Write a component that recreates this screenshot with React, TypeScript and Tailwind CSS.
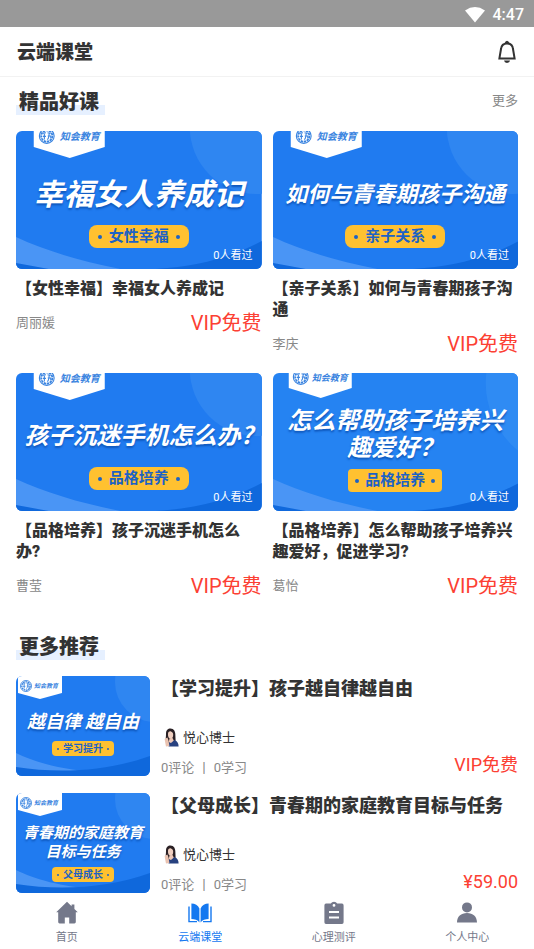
import { clsx } from "clsx";

type CoverKind = "wide" | "wideAlt" | "small";

const courses = [
  {
    title: "【女性幸福】幸福女人养成记",
    teacher: "周丽媛",
    kind: "wide" as CoverKind,
    coverText: "幸福女人养成记",
    tag: "女性幸福",
    textClass: "text-[30px] leading-[54px]",
  },
  {
    title: "【亲子关系】如何与青春期孩子沟通",
    teacher: "李庆",
    kind: "wide" as CoverKind,
    coverText: "如何与青春期孩子沟通",
    tag: "亲子关系",
    textClass: "text-[22px] leading-[54px]",
  },
  {
    title: "【品格培养】孩子沉迷手机怎么办?",
    teacher: "曹莹",
    kind: "wide" as CoverKind,
    coverText: "孩子沉迷手机怎么办?",
    tag: "品格培养",
    textClass: "text-[24px] leading-[54px]",
  },
  {
    title: "【品格培养】怎么帮助孩子培养兴趣爱好，促进学习?",
    teacher: "葛怡",
    kind: "wideAlt" as CoverKind,
    coverText: "怎么帮助孩子培养兴\n趣爱好？",
    tag: "品格培养",
    textClass: "text-[24px] leading-[27px]",
  },
];

const recommends = [
  {
    title: "【学习提升】孩子越自律越自由",
    coverText: "越自律 越自由",
    tag: "学习提升",
    price: "VIP免费",
    textClass: "mb-0.5 text-[18px] leading-[38px]",
    padClass: "pt-[25px]",
  },
  {
    title: "【父母成长】青春期的家庭教育目标与任务",
    coverText: "青春期的家庭教育\n目标与任务",
    tag: "父母成长",
    price: "¥59.00",
    textClass: "mb-[7px] text-[15px] leading-[19px]",
    padClass: "pt-[29px]",
  },
];

const Emblem = ({ x, y, r }: { x: number; y: number; r: number }) => (
  <g transform={`translate(${x} ${y}) scale(${r / 8})`} fill="none" stroke="#3a84e0">
    <circle r="7.4" strokeWidth="1.1" />
    <circle r="5.6" strokeWidth="1.8" strokeDasharray="2.4 0.7" />
    <path d="M-3.6 -2.6 L-1 -3.4 M-2.4 -3 V3.4 M-4 0.4 H-0.8 M0.8 -3.2 L3.8 -2.4 M2.4 -3.6 C2.4 0 2 2.4 0.6 3.6 M1 0 H4 V2.6" strokeWidth="1.1" />
  </g>
);

const CoverArt = ({ kind }: { kind: CoverKind }) => {
  if (kind === "small") {
    return (
      <svg className="absolute inset-0 h-full w-full" viewBox="0 0 134 100" preserveAspectRatio="xMidYMid slice" aria-hidden="true">
        <rect width="134" height="100" fill="#207bf0" />
        <circle cx="139" cy="6" r="40" fill="#2f86f1" />
        <path d="M0 77 C18 86 46 94 80 96 L60 100 H0 Z" fill="#4a95f5" />
        <path d="M0 91 C45 98 92 95 134 80 V100 H0 Z" fill="#0f68dc" />
        <path d="M2 0 H46 V17 L24 23 L2 17 Z" fill="#fff" />
        <Emblem x={10} y={10} r={6} />
        <text x="18" y="12" fontSize="6" fontStyle="italic" fontWeight="700" fill="#3a84e0">知会教育</text>
      </svg>
    );
  }
  const alt = kind === "wideAlt";
  return (
    <svg className="absolute inset-0 h-full w-full" viewBox="0 0 246 138" preserveAspectRatio="xMidYMid slice" aria-hidden="true">
      <rect width="246" height="138" fill={alt ? "#2583f2" : "#207bf0"} />
      {alt ? <circle cx="300" cy="10" r="87" fill="#2f8bf3" /> : <circle cx="241" cy="-4" r="67" fill="#2f86f1" />}
      <path d="M0 106 C32 121 74 133 116 140 H0 Z" fill="#4a95f5" />
      <path d="M0 132 Q22 136 44 140 H0 Z M246 110 C218 125 186 135 140 138 H246 Z" fill="#0f68dc" />
      {alt ? (
        <>
          <path d="M16 0 H79 V15 L48 25 L16 15 Z" fill="#fff" />
          <Emblem x={28} y={4} r={8} />
          <text x="39" y="8" fontSize="9" fontStyle="italic" fontWeight="700" fill="#3a84e0">知会教育</text>
        </>
      ) : (
        <>
          <path d="M18 0 H89 V16 L54 27 L18 16 Z" fill="#fff" />
          <Emblem x={31} y={5} r={8} />
          <text x="44" y="9" fontSize="10" fontStyle="italic" fontWeight="700" fill="#3a84e0">知会教育</text>
        </>
      )}
    </svg>
  );
};

const CoverTitle = ({ text, className }: { text: string; className: string }) => (
  <p
    className={clsx(
      "relative text-center font-['Noto_Sans_CJK_SC',sans-serif] font-bold whitespace-pre text-white italic [text-shadow:0_2px_2px_#0f58bd]",
      className
    )}
  >
    {text}
  </p>
);

const Heading = ({ children }: { children: string }) => (
  <h2 className="bg-[linear-gradient(#e6f0ff,#e6f0ff)] bg-[length:100%_10px] bg-bottom bg-no-repeat pt-0.5 pr-1.5 pl-[3px] text-xl leading-[26px] font-black">
    {children}
  </h2>
);

const CourseCard = ({ course }: { course: (typeof courses)[number] }) => {
  const alt = course.kind === "wideAlt";
  return (
    <article>
      <div
        className={clsx(
          "relative flex h-[138px] flex-col items-center overflow-hidden rounded-md",
          alt ? "gap-2.5 pt-8" : "gap-1.5 pt-[34px]"
        )}
      >
        <CoverArt kind={course.kind} />
        <CoverTitle text={course.coverText} className={course.textClass} />
        <div
          className={clsx(
            "relative flex items-center bg-[#ffc130] text-[15px] leading-[23px] font-bold text-[#1d62c4]",
            alt ? "gap-1.5 rounded px-[7px]" : "gap-[7px] rounded-lg px-[9px]"
          )}
        >
          <i className="size-1 rounded-full bg-[#1d62c4]" />
          {course.tag}
          <i className="size-1 rounded-full bg-[#1d62c4]" />
        </div>
        <span className="absolute right-[9px] bottom-[3px] text-[11px] leading-5 text-white">0人看过</span>
      </div>
      <h3 className="mt-[9px] text-base leading-[21px] font-black">{course.title}</h3>
      <div className="mt-2 flex h-8 items-center justify-between">
        <span className="text-[13px] text-[#888]">{course.teacher}</span>
        <span className="text-xl text-[#fc4033]">VIP免费</span>
      </div>
    </article>
  );
};

const Avatar = () => (
  <svg className="h-5 w-4" viewBox="0 0 16 20" aria-hidden="true">
    <path d="M3 6 C3 2 5 0.6 7.4 0.6 C11 0.6 12.6 3.6 12.4 8 C12.4 11 13 13 12 14 L4 15 C2 12 3 10 3 6 Z" fill="#2a2024" />
    <path d="M5 6 C5 3.8 6.4 3 8 3.4 C10 4 10.6 6 10 8.4 C9.4 10.2 8.4 11 7.2 10.8 C5.8 10.4 4.8 8.4 5 6 Z" fill="#f0cfc0" />
    <path d="M6.6 10.6 L9.4 9.8 L11 13 L8 16 L5.6 14 Z" fill="#edc8b8" />
    <path d="M5.4 14 L8 15 L11.4 12 C14.4 12.8 15.6 15.4 15.6 18.6 H5.6 Z" fill="#27417f" />
    <path d="M1.6 11 L4.4 9.4 L5.4 12 L6.4 18 L3 18.4 Z" fill="#eac3b1" />
  </svg>
);

const RecommendItem = ({ item }: { item: (typeof recommends)[number] }) => (
  <article className="flex h-[100px] gap-[11px]">
    <div className={clsx("relative flex w-[134px] shrink-0 flex-col items-center overflow-hidden rounded-md", item.padClass)}>
      <CoverArt kind="small" />
      <CoverTitle text={item.coverText} className={item.textClass} />
      <div className="relative flex h-[15px] items-center gap-1 rounded bg-[#ffc130] px-[5px] text-[10px] leading-[15px] font-bold text-[#1d62c4]">
        <i className="size-0.5 rounded-full bg-[#1d62c4]" />
        {item.tag}
        <i className="size-0.5 rounded-full bg-[#1d62c4]" />
      </div>
    </div>
    <div className="flex min-w-0 flex-1 flex-col">
      <h3 className="text-lg leading-[26px] font-black">{item.title}</h3>
      <div className="mt-auto flex items-end justify-between">
        <div className="text-[13px]">
          <div className="flex h-5 items-center gap-1 pl-0.5">
            <Avatar />
            悦心博士
          </div>
          <div className="mt-3 leading-4 text-[#888]">0评论 丨 0学习</div>
        </div>
        <span className="text-lg leading-[22px] text-[#fc4033]">{item.price}</span>
      </div>
    </div>
  </article>
);

const tabs = [
  {
    label: "首页",
    active: false,
    icon: <path d="M12 0.8 L1.2 11.2 H3.2 V21 Q3.2 22.4 4.6 22.4 H9.8 V16.4 H14.2 V22.4 H19.4 Q20.8 22.4 20.8 21 V11.2 H22.8 L19.4 7.9 V3.6 H16.6 V5.2 Z" />,
  },
  {
    label: "云端课堂",
    active: true,
    icon: (
      <>
        <path d="M3.4 2.6 C7 2.6 10 4.2 11.4 7.4 V21.4 C9.6 19 6.6 18 3.4 18 Z M20.6 2.6 C17 2.6 14 4.2 12.6 7.4 V21.4 C14.4 19 17.4 18 20.6 18 Z" />
        <path d="M1 5.4 V20.6 H9 M23 5.4 V20.6 H15" fill="none" stroke="currentColor" strokeWidth="1.4" />
      </>
    ),
  },
  {
    label: "心理测评",
    active: false,
    icon: (
      <path fillRule="evenodd" d="M4 2.6 H8.8 Q9.8 0.8 12 0.8 Q14.2 0.8 15.2 2.6 H20 Q21.6 2.6 21.6 4.4 V21.2 Q21.6 23 20 23 H4 Q2.4 23 2.4 21.2 V4.4 Q2.4 2.6 4 2.6 Z M12 3 A1.4 1.4 0 1 0 12 5.8 A1.4 1.4 0 1 0 12 3 Z M7 10 V12 H17 V10 Z M7 15.4 V17.4 H17 V15.4 Z" />
    ),
  },
  {
    label: "个人中心",
    active: false,
    icon: <path d="M12 1.4 A5 5 0 1 1 12 11.4 A5 5 0 1 1 12 1.4 Z M2 21.6 C2 15.4 6 12 12 12 C18 12 22 15.4 22 21.6 Z" />,
  },
];

export default function App() {
  return (
    <div className="flex min-h-screen flex-col bg-white font-[Roboto,'Noto_Sans_CJK_SC',sans-serif] text-[#333]">
      <div className="flex h-[27px] items-center justify-end gap-2 bg-[#999] pt-0.5 pr-2.5 text-base font-medium text-white">
        <svg className="h-4 w-5" viewBox="0 0 20 16" fill="currentColor" aria-hidden="true">
          <path d="M0 3.4 Q10 -3.4 20 3.4 L10 15.6 Z" />
        </svg>
        4:47
      </div>

      <header className="flex h-[50px] items-center justify-between border-b border-[#f2f2f2] pr-4 pl-[17px]">
        <h1 className="pt-[3px] text-[19px] font-black">云端课堂</h1>
        <button type="button" aria-label="消息">
          <svg className="h-6 w-[22px]" viewBox="0 0 22 24" fill="none" stroke="currentColor" aria-hidden="true">
            <path d="M3.4 18.4 L5 9 C5.4 5.2 7.6 3.4 11 3.4 C14.4 3.4 16.6 5.2 17 9 L18.6 18.4 Z" strokeWidth="2" />
            <path d="M8.4 3.4 Q9.4 0.8 11 0.8 Q12.6 0.8 13.6 3.4 Z M8 20.6 H14 Q13.6 23 11 23 Q8.4 23 8 20.6 Z" fill="currentColor" stroke="none" />
          </svg>
        </button>
      </header>

      <main className="px-4">
        <div className="mt-2.5 flex items-center justify-between">
          <Heading>精品好课</Heading>
          <a href="#more" className="text-[13px] text-[#888]">更多</a>
        </div>
        <section className="mt-4 grid grid-cols-2 gap-x-[11px] gap-y-[13px]">
          {courses.map((course) => (
            <CourseCard key={course.title} course={course} />
          ))}
        </section>

        <div className="mt-[30px] flex">
          <Heading>更多推荐</Heading>
        </div>
        <section className="mt-4 flex flex-col gap-[17px]">
          {recommends.map((item) => (
            <RecommendItem key={item.title} item={item} />
          ))}
        </section>
      </main>

      <nav className="sticky bottom-0 mt-auto grid h-14 grid-cols-4 bg-white">
        {tabs.map((tab) => (
          <button
            key={tab.label}
            type="button"
            className={clsx("flex flex-col items-center gap-[5px] pt-2 text-[11px] leading-4", tab.active ? "text-[#1478f0]" : "text-[#74788a]")}
          >
            <svg className="size-6" viewBox="0 0 24 24" fill="currentColor" aria-hidden="true">
              {tab.icon}
            </svg>
            {tab.label}
          </button>
        ))}
      </nav>
    </div>
  );
}
